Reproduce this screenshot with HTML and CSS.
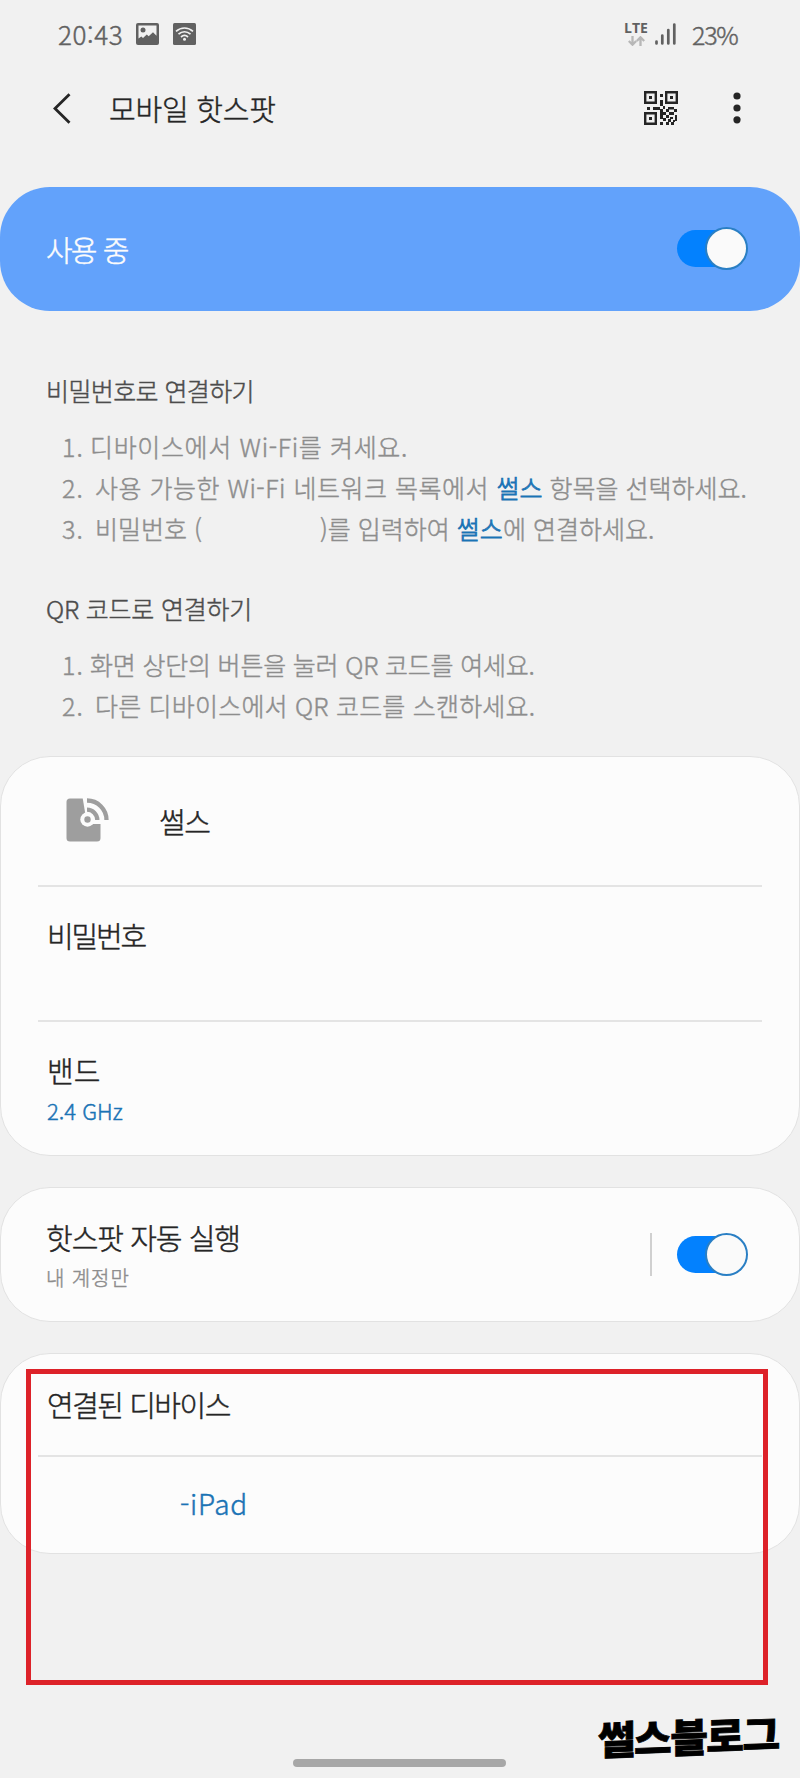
FILE: index.html
```html
<!DOCTYPE html>
<html lang="ko">
<head>
<meta charset="utf-8">
<title>모바일 핫스팟</title>
<link rel="stylesheet" href="styles.css">
</head>
<body>
<div class="screen">
  <div class="status">
    <span class="clock">20:43</span>
    <svg class="picture" width="23" height="22" viewBox="0 0 23 22"><rect width="23" height="22" rx="2" fill="#616161"/><path d="M2.5 2.5h18v10.2L17 9.3l-4.3 4-1.9-1.8L7 15l-1.7-1.6-2.8 2z" fill="#f1f1f1"/><circle cx="7" cy="7" r="2.5" fill="#616161"/></svg>
    <svg class="hotspot" width="23" height="22" viewBox="0 0 23 22"><rect width="23" height="22" rx="1.5" fill="#616161"/><g fill="none" stroke="#f1f1f1" stroke-width="1.7"><path d="M3 8.3c5-4.4 12-4.4 17 0M5.5 11.2c3.6-3.2 8.400-3.200 12 0M8 14c2.200-2 4.800-2 7 0"/></g><circle cx="11.500" cy="16.300" r="1.500" fill="#f1f1f1"/></svg>
    <div class="lte"><span>LTE</span><svg width="17" height="10" viewBox="0 0 17 10" fill="none" stroke="#b7b7b7" stroke-width="2.300"><path d="M4.500 0v8M.800 5l3.700 3.700L8.200 5M12.500 10V2M8.800 5l3.700-3.700L16.200 5"/></svg></div>
    <svg class="bars" width="21" height="22" viewBox="0 0 21 22" stroke="#616161" stroke-width="2.700" stroke-linecap="round"><path d="M1.500 18.500v2M7.300 12.500v8M13.300 7v13.500M19.300 1.500v19"/></svg>
    <span class="battery">23%</span>
  </div>

  <header class="bar">
    <svg class="back" width="18" height="31" viewBox="0 0 18 31" fill="none" stroke="#252525" stroke-width="2.800"><path d="M16.500 1.200 2 15.500l14.500 14.300"/></svg>
    <h1>모바일 핫스팟</h1>
    <svg class="qr" width="34" height="34" viewBox="0 0 34 34"><g fill="none" stroke="#252525" stroke-width="2.400"><path d="M1.200 1.200h10.600v10.600H1.200zM22.200 1.200h10.600v10.600H22.200zM1.200 22.200h10.600v10.600H1.200z"/></g><path fill="#252525" d="M5 5h3v3H5zM26 5h3v3h-3zM5 26h3v3H5zM16 3h3v3h-3zM16 9h3v6h-3zM3 16h3v3H3zM9 16h7v3H9zM16 18h3v10h-3zM19 15h2v3h-2zM24 16h6v2.500h-6zM22 18h3v3h-3zM30 18h3v3h-3zM19 21h3v3h-3zM25 21h5v3h-5zM22 24h3v3h-3zM31 24h2v6h-2zM26 26h3v2h-3zM19 27h3v3h-3zM24 28h3v3h-3zM16 31h3v3h-3zM22 31h3v3h-3zM27 31h3v3h-3zM29 29h2v2h-2z"/></svg>
    <svg class="more" width="8" height="32" viewBox="0 0 8 32" fill="#252525"><circle cx="4" cy="4" r="3.600"/><circle cx="4" cy="16" r="3.600"/><circle cx="4" cy="27.800" r="3.600"/></svg>
  </header>

  <section class="banner">
    <span class="state">사용 중</span>
    <i class="switch"></i>
  </section>

  <section class="guide">
    <h2 class="h-pw">비밀번호로 연결하기</h2>
    <ol>
      <li class="one"><b>1.</b><span class="a1">디바이스에서 Wi-Fi를 켜세요.</span></li>
      <li><b>2.</b><span><span class="a2">사용 가능한 Wi-Fi 네트워크 목록에서 </span><em>썰스</em> 항목을 선택하세요.</span></li>
      <li><b>3.</b><span class="a3">비밀번호 (</span><span class="a4">)를 입력하여 <em>썰스</em>에 연결하세요.</span></li>
    </ol>
    <h2 class="h-qr">QR 코드로 연결하기</h2>
    <ol>
      <li class="one"><b>1.</b><span class="b1">화면 상단의 버튼을 눌러 QR 코드를 여세요.</span></li>
      <li><b>2.</b><span class="b2">다른 디바이스에서 QR 코드를 스캔하세요.</span></li>
    </ol>
  </section>

  <section class="card network">
    <div class="row name">
      <svg width="43" height="44" viewBox="0 0 43 44"><rect x=".5" y=".5" width="34" height="43" rx="3.500" fill="#9e9e9e"/><path d="M16.500-1H44v27H21z" fill="#fcfcfc"/><circle cx="21.500" cy="21.500" r="7.200" fill="#fcfcfc"/><circle cx="21.500" cy="21.500" r="3.200" fill="#9e9e9e"/><path d="M21 11.700a10.300 10.300 0 0 1 10.300 10.300M21 2.500A19.500 19.500 0 0 1 40.500 22" fill="none" stroke="#9e9e9e" stroke-width="4.300"/></svg>
      <span class="t ssid">썰스</span>
    </div>
    <div class="row pw"><span class="t t-pw">비밀번호</span></div>
    <div class="row band"><span class="t">밴드</span><span class="ghz">2.4 GHz</span></div>
  </section>

  <section class="card auto">
    <div class="labels"><span class="t t-auto">핫스팟 자동 실행</span><span class="sub">내 계정만</span></div>
    <i class="split"></i>
    <i class="switch"></i>
  </section>

  <section class="card devices">
    <div class="row head"><span class="t t-dev">연결된 디바이스</span></div>
    <div class="row dev"><span class="ipad">-iPad</span></div>
  </section>

  <div class="highlight"></div>
  <div class="mark"><span>썰스블로그</span></div>
  <div class="home"></div>
</div>
</body>
</html>
```

FILE: styles.css
```css
*, *::before, *::after { box-sizing: border-box; }
body { margin: 0; }
.screen {
  position: relative;
  width: 800px;
  height: 1778px;
  overflow: hidden;
  display: flex;
  flex-direction: column;
  background: #f1f1f1;
  color: #252525;
  font-family: "Noto Sans CJK KR", sans-serif;
  font-weight: 300;
  white-space: nowrap;
  -webkit-text-stroke: 0.45px currentColor;
}
h1, h2, ol { margin: 0; padding: 0; font-weight: 300; list-style: none; }
b, em, i { font-weight: inherit; font-style: normal; }

.status { display: flex; flex: none; align-items: center; height: 68px; padding: 0 63px 0 58px; color: #616161; font-size: 26px; line-height: 68px; }
.clock { width: 78px; letter-spacing: 0.6px; }
.hotspot { margin-left: 14px; }
.lte { display: flex; flex-direction: column; align-items: center; gap: 3px; width: 24px; margin-left: auto; font: 700 14px/11px "Open Sans", sans-serif; -webkit-text-stroke: 0; }
.bars { margin-left: 7px; }
.battery { width: 45px; margin-left: 16px; font-size: 25px; letter-spacing: -1.2px; }

.bar { display: flex; flex: none; align-items: center; height: 80px; padding-left: 53px; }
.bar h1 { width: 535px; margin-left: 38px; font-size: 29px; line-height: 80px; letter-spacing: -0.2px; }
.bar .more { margin-left: 55px; }

.banner { display: flex; flex: none; align-items: center; justify-content: space-between; height: 124px; margin-top: 39px; padding: 0 52px 2px 46px; border-radius: 50px; background: #62a2fb; color: #fcfcfc; }
.state { padding-top: 2px; font-size: 29px; letter-spacing: -1.9px; word-spacing: 1px; }
.switch { position: relative; flex: none; width: 71px; height: 43px; }
.switch::before { content: ""; position: absolute; left: 0; top: 3px; width: 62px; height: 37px; border-radius: 19px; background: #0381fe; }
.switch::after { content: ""; position: absolute; right: 0; top: 0; width: 43px; height: 43px; border: 2px solid #2a7fc4; border-radius: 50%; background: #fafafa; }

.guide { flex: none; height: 445px; padding: 59px 0 0 46px; color: #8d8d8d; font-size: 25px; line-height: 41px; }
.guide h2 { height: 56px; color: #4c4c4c; font-size: 25px; line-height: 41px; }
.guide ol + h2 { margin-top: 39px; }
.guide li { display: flex; height: 41px; padding-left: 16px; }
.guide b { width: 33px; letter-spacing: 1px; }
.guide .one b { width: 28px; }
.guide em { color: #1a73b5; -webkit-text-stroke-width: 0.8px; }
.h-pw { letter-spacing: -0.6px; }
.h-qr { letter-spacing: -0.2px; }
.a1 { letter-spacing: 0.65px; }
.a2 { letter-spacing: 0.5px; }
.a3 { width: 225px; }
.b1 { letter-spacing: -0.2px; }
.b2 { letter-spacing: 0.2px; }

.card { flex: none; border: 1px solid #e2e2e2; border-radius: 50px; background: #fcfcfc; }
.row { display: flex; margin: 0 37px; padding-left: 9px; }
.row + .row { border-top: 2px solid #e4e4e4; }
.t { font-size: 29px; line-height: 40px; }
.network { height: 400px; }
.name { height: 128px; padding: 41px 0 0 28px; }
.ssid { margin: 3px 0 0 50px; letter-spacing: -1.5px; }
.pw { height: 135px; padding-top: 28px; }
.t-pw { letter-spacing: -2.2px; }
.band { flex-direction: column; padding-top: 28px; }
.ghz { font-size: 22px; line-height: 40px; color: #1a73b5; }

.auto { display: flex; align-items: center; height: 135px; margin-top: 31px; padding: 0 51px 0 45px; }
.labels { display: flex; flex-direction: column; flex: 1; padding-top: 7px; }
.t-auto { letter-spacing: -1px; }
.sub { color: #8d8d8d; font-size: 20px; line-height: 42px; letter-spacing: 0.9px; }
.split { width: 2px; height: 43px; margin-right: 25px; background: #d0d0d0; }

.devices { height: 201px; margin-top: 31px; }
.head { height: 101px; padding-top: 30px; }
.t-dev { letter-spacing: -1.5px; }
.dev { padding: 26px 0 0 142px; }
.ipad { color: #1a73b5; font-size: 28px; line-height: 40px; letter-spacing: 0.7px; }

.highlight { position: absolute; left: 26px; top: 1369px; width: 742px; height: 316px; border: 5px solid #dd2229; }
.mark { position: absolute; left: 598px; top: 1707px; color: #000; font-size: 41px; font-weight: 900; line-height: 56px; letter-spacing: -1.6px; -webkit-text-stroke: 0.8px #000; }
.mark span { display: block; transform: skewY(-2deg) scaleY(0.97); }
.home { position: absolute; left: 293px; top: 1759px; width: 213px; height: 8px; border-radius: 4px; background: #a7a7a7; }
```
